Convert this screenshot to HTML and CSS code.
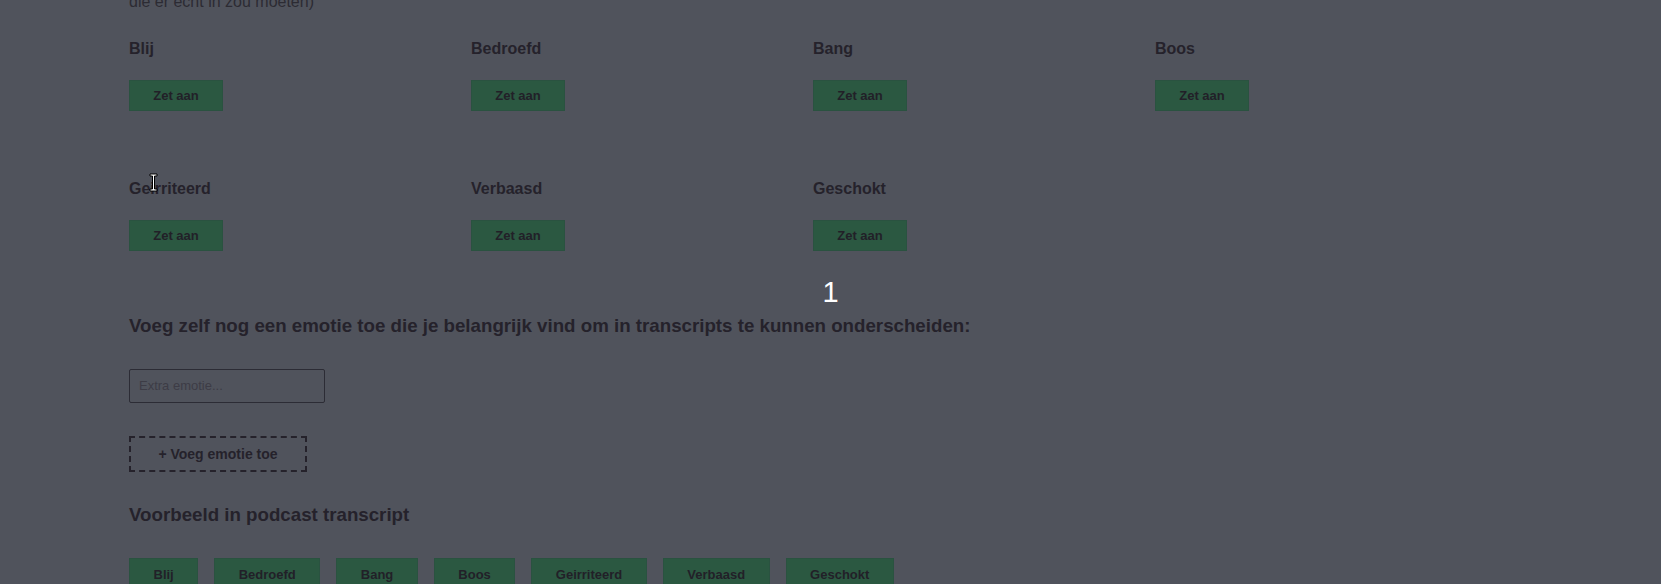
FILE: index.html
```html
<!DOCTYPE html>
<html lang="nl">
<head>
<meta charset="utf-8">
<title>Emoties</title>
<link rel="stylesheet" href="styles.css">
</head>
<body>
<div class="section">
  <p class="intro">die er echt in zou moeten)</p>
  <div class="emotions">
    <div class="emotion"><h4>Blij</h4><button class="toggle">Zet aan</button></div>
    <div class="emotion"><h4>Bedroefd</h4><button class="toggle">Zet aan</button></div>
    <div class="emotion"><h4>Bang</h4><button class="toggle">Zet aan</button></div>
    <div class="emotion"><h4>Boos</h4><button class="toggle">Zet aan</button></div>
    <div class="emotion"><h4>Geirriteerd</h4><button class="toggle">Zet aan</button></div>
    <div class="emotion"><h4>Verbaasd</h4><button class="toggle">Zet aan</button></div>
    <div class="emotion"><h4>Geschokt</h4><button class="toggle">Zet aan</button></div>
  </div>
</div>
<div class="step">1</div>
<div class="section">
  <h3 class="add-title">Voeg zelf nog een emotie toe die je belangrijk vind om in transcripts te kunnen onderscheiden:</h3>
  <input class="extra" type="text" placeholder="Extra emotie...">
  <div><button class="add">+ Voeg emotie toe</button></div>
  <h3 class="example-title">Voorbeeld in podcast transcript</h3>
  <div class="tags">
    <span class="tag">Blij</span>
    <span class="tag">Bedroefd</span>
    <span class="tag">Bang</span>
    <span class="tag">Boos</span>
    <span class="tag">Geirriteerd</span>
    <span class="tag">Verbaasd</span>
    <span class="tag">Geschokt</span>
  </div>
</div>
<svg class="cursor" width="9" height="19" viewBox="0 0 9 19" aria-hidden="true">
  <path d="M1 1h7v2H5.5v13H8v2H1v-2h2.5V3H1z" fill="#fff" stroke="#000" stroke-width="1"/>
</svg>
</body>
</html>
```
FILE: styles.css
```css
html, body {
  margin: 0;
  padding: 0;
}
body {
  background: #50535c;
  color: #25222b;
  font-family: "Liberation Sans", Arial, sans-serif;
  overflow: hidden;
  height: 584px;
  position: relative;
}
.section {
  padding-left: 129px;
}
.intro {
  margin: -7px 0 0;
  font-size: 16px;
  line-height: 18px;
  color: #2c2b33;
}
.emotions {
  margin-top: 29px;
  display: grid;
  grid-template-columns: repeat(4, 342px);
  row-gap: 69px;
}
.emotion {
  display: flex;
  flex-direction: column;
  align-items: flex-start;
}
.emotion h4 {
  margin: 0;
  font-size: 16px;
  line-height: 18px;
  font-weight: bold;
}
.toggle {
  margin-top: 22px;
  height: 31px;
  padding: 0 23px;
  width: 94px;
  background: #2b5841;
  border: 1px solid #2a5240;
  color: #222028;
  font-family: "Liberation Sans", Arial, sans-serif;
  font-size: 13px;
  font-weight: bold;
  white-space: nowrap;
}
.step {
  margin-top: 24px;
  text-align: center;
  color: #ffffff;
  font-size: 29px;
  line-height: 34px;
}
.add-title {
  margin: 6px 0 0;
  font-size: 18.72px;
  line-height: 21.5px;
  font-weight: bold;
}
.extra {
  display: block;
  margin-top: 32px;
  box-sizing: border-box;
  width: 196px;
  height: 34px;
  padding: 0 9px;
  background: transparent;
  border: 1px solid #2c2c35;
  border-radius: 2px;
  font-family: "Liberation Sans", Arial, sans-serif;
  font-size: 13px;
  color: #25222b;
}
.extra::placeholder {
  color: #3d3c46;
}
.add {
  margin-top: 33px;
  box-sizing: border-box;
  width: 178px;
  height: 36px;
  background: transparent;
  border: 2px dashed #25222b;
  color: #25222b;
  font-family: "Liberation Sans", Arial, sans-serif;
  font-size: 14px;
  font-weight: bold;
}
.example-title {
  margin: 32px 0 0;
  font-size: 18.72px;
  line-height: 21.5px;
  font-weight: bold;
}
.tags {
  margin-top: 33px;
  display: flex;
  gap: 16px;
}
.tag {
  display: flex;
  align-items: center;
  height: 31px;
  padding: 0 23.5px;
  background: #2b5841;
  border: 1px solid #2a5240;
  color: #222028;
  font-size: 13px;
  font-weight: bold;
}
.cursor {
  position: absolute;
  left: 149px;
  top: 173px;
}
```
